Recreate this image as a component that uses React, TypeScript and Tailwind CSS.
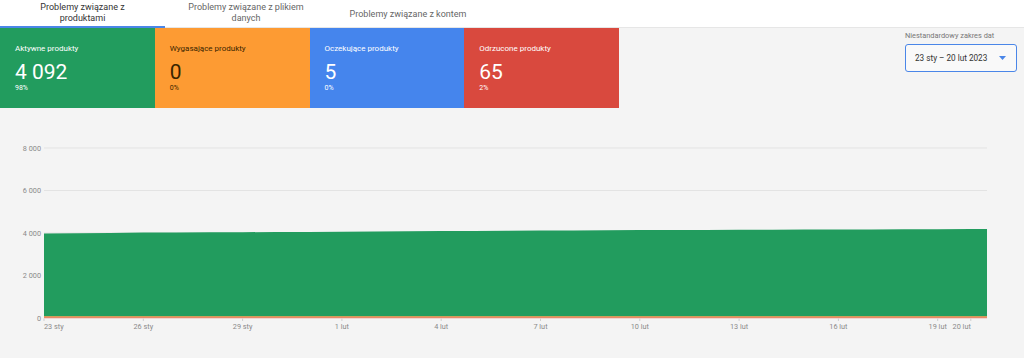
import React from "react";

const cards = [
  { title: "Aktywne produkty", value: "4 092", pct: "98%", bg: "bg-[#229c5e]", text: "text-white" },
  { title: "Wygasające produkty", value: "0", pct: "0%", bg: "bg-[#fd9b33]", text: "text-[#3a2500]" },
  { title: "Oczekujące produkty", value: "5", pct: "0%", bg: "bg-[#4585ed]", text: "text-white" },
  { title: "Odrzucone produkty", value: "65", pct: "2%", bg: "bg-[#d9493e]", text: "text-white" },
];

const xLabels = [
  { d: 0, t: "23 sty", anchor: "start" },
  { d: 3, t: "26 sty", anchor: "middle" },
  { d: 6, t: "29 sty", anchor: "middle" },
  { d: 9, t: "1 lut", anchor: "middle" },
  { d: 12, t: "4 lut", anchor: "middle" },
  { d: 15, t: "7 lut", anchor: "middle" },
  { d: 18, t: "10 lut", anchor: "middle" },
  { d: 21, t: "13 lut", anchor: "middle" },
  { d: 24, t: "16 lut", anchor: "middle" },
  { d: 27, t: "19 lut", anchor: "middle" },
  { d: 28, t: "20 lut", anchor: "end" },
];

const yLabels = [
  { y: 149, t: "8 000" },
  { y: 191.5, t: "6 000" },
  { y: 234, t: "4 000" },
  { y: 276.5, t: "2 000" },
  { y: 319, t: "0" },
];

function Chart() {
  const x0 = 44;
  const step = 33.1;
  const xEnd = 987;
  const tops = [234.5, 234.2, 234, 233.6, 233.4, 233.3, 233.2, 233, 232.9, 232.7, 232.5, 232.3, 232.1, 232, 231.8, 231.6, 231.4, 231.3, 231.1, 231, 230.9, 230.8, 230.7, 230.6, 230.5, 230.4, 230.3, 230.2, 230.1];
  const pts = tops.map((t, i) => `${x0 + i * step},${t}`).join(" L");
  const d = `M${pts} L${xEnd},230 L${xEnd},317.5 L${x0},317.5 Z`;
  return (
    <svg className="block" width="1024" height="249" viewBox="0 109 1024 249">
      {yLabels.map((l) => (
        <g key={l.t}>
          {l.t !== "0" && <line x1={44} x2={987} y1={l.y} y2={l.y} stroke="#e3e3e3" strokeWidth="1" />}
          <text x={41} y={l.y + 2.6} textAnchor="end" fontSize="7.3" fill="#8a8a8a" fontFamily="Roboto, sans-serif">
            {l.t}
          </text>
        </g>
      ))}
      <path d={d} fill="#229c5e" />
      <rect x={44} y={317.3} width={943} height={1.2} fill="#f08a3a" />
      <rect x={44} y={318.4} width={943} height={0.8} fill="#e0654a" />
      {xLabels.map((l) => {
        const x = x0 + l.d * step;
        return (
          <g key={l.t}>
            <line x1={x} x2={x} y1={319.5} y2={322} stroke="#cfcfcf" strokeWidth="1" />
            <text x={x} y={330} textAnchor={l.anchor as "start" | "middle" | "end"} fontSize="7.3" fill="#8a8a8a" fontFamily="Roboto, sans-serif">
              {l.t}
            </text>
          </g>
        );
      })}
    </svg>
  );
}

export default function App() {
  return (
    <div className="w-[1024px] h-[358px] overflow-hidden bg-[#f4f4f4] font-['Roboto',sans-serif]">
      <div className="flex h-[28px] bg-white border-b border-[#e6e6e6]">
        <div className="relative w-[165px] flex items-center justify-center text-center text-[9px] leading-[11px] text-[#333]">
          <span className="mt-[-1px]">Problemy związane z<br />produktami</span>
          <div className="absolute left-0 right-0 bottom-[-1px] h-[2px] bg-[#4a86e8]" />
        </div>
        <div className="w-[162px] flex items-center justify-center text-center text-[9px] leading-[11.5px] text-[#666]">
          <span className="mt-[-1px]">Problemy związane z plikiem<br />danych</span>
        </div>
        <div className="w-[162px] flex items-center justify-center text-center text-[9px] leading-[11px] text-[#666]">
          <span className="mt-[1px]">Problemy związane z kontem</span>
        </div>
      </div>
      <div className="flex">
        <div className="flex h-[80px]">
          {cards.map((c) => (
            <div key={c.title} className={`w-[154.75px] ${c.bg} ${c.text} pl-[15px] pt-[16px]`}>
              <div className="text-[8px] leading-[10px]">{c.title}</div>
              <div className="text-[21px] leading-[22px] mt-[7px]">{c.value}</div>
              <div className="text-[7px] leading-[9px] mt-[1px]">{c.pct}</div>
            </div>
          ))}
        </div>
        <div className="ml-auto mr-[7px] pt-[3px] w-[112px]">
          <div className="text-[7.4px] leading-[10px] text-[#777]">Niestandardowy zakres dat</div>
          <div className="mt-[3px] h-[28px] bg-[#f9f9f9] border-[1.5px] border-[#4a86e8] rounded-[3px] flex items-center pl-[9px] pr-[10px] text-[8.2px] text-[#333]">
            <span>23 sty – 20 lut 2023</span>
            <svg className="ml-auto" width="7" height="4" viewBox="0 0 7 4">
              <path d="M0 0 L7 0 L3.5 4 Z" fill="#4a86e8" />
            </svg>
          </div>
        </div>
      </div>
      <Chart />
    </div>
  );
}
